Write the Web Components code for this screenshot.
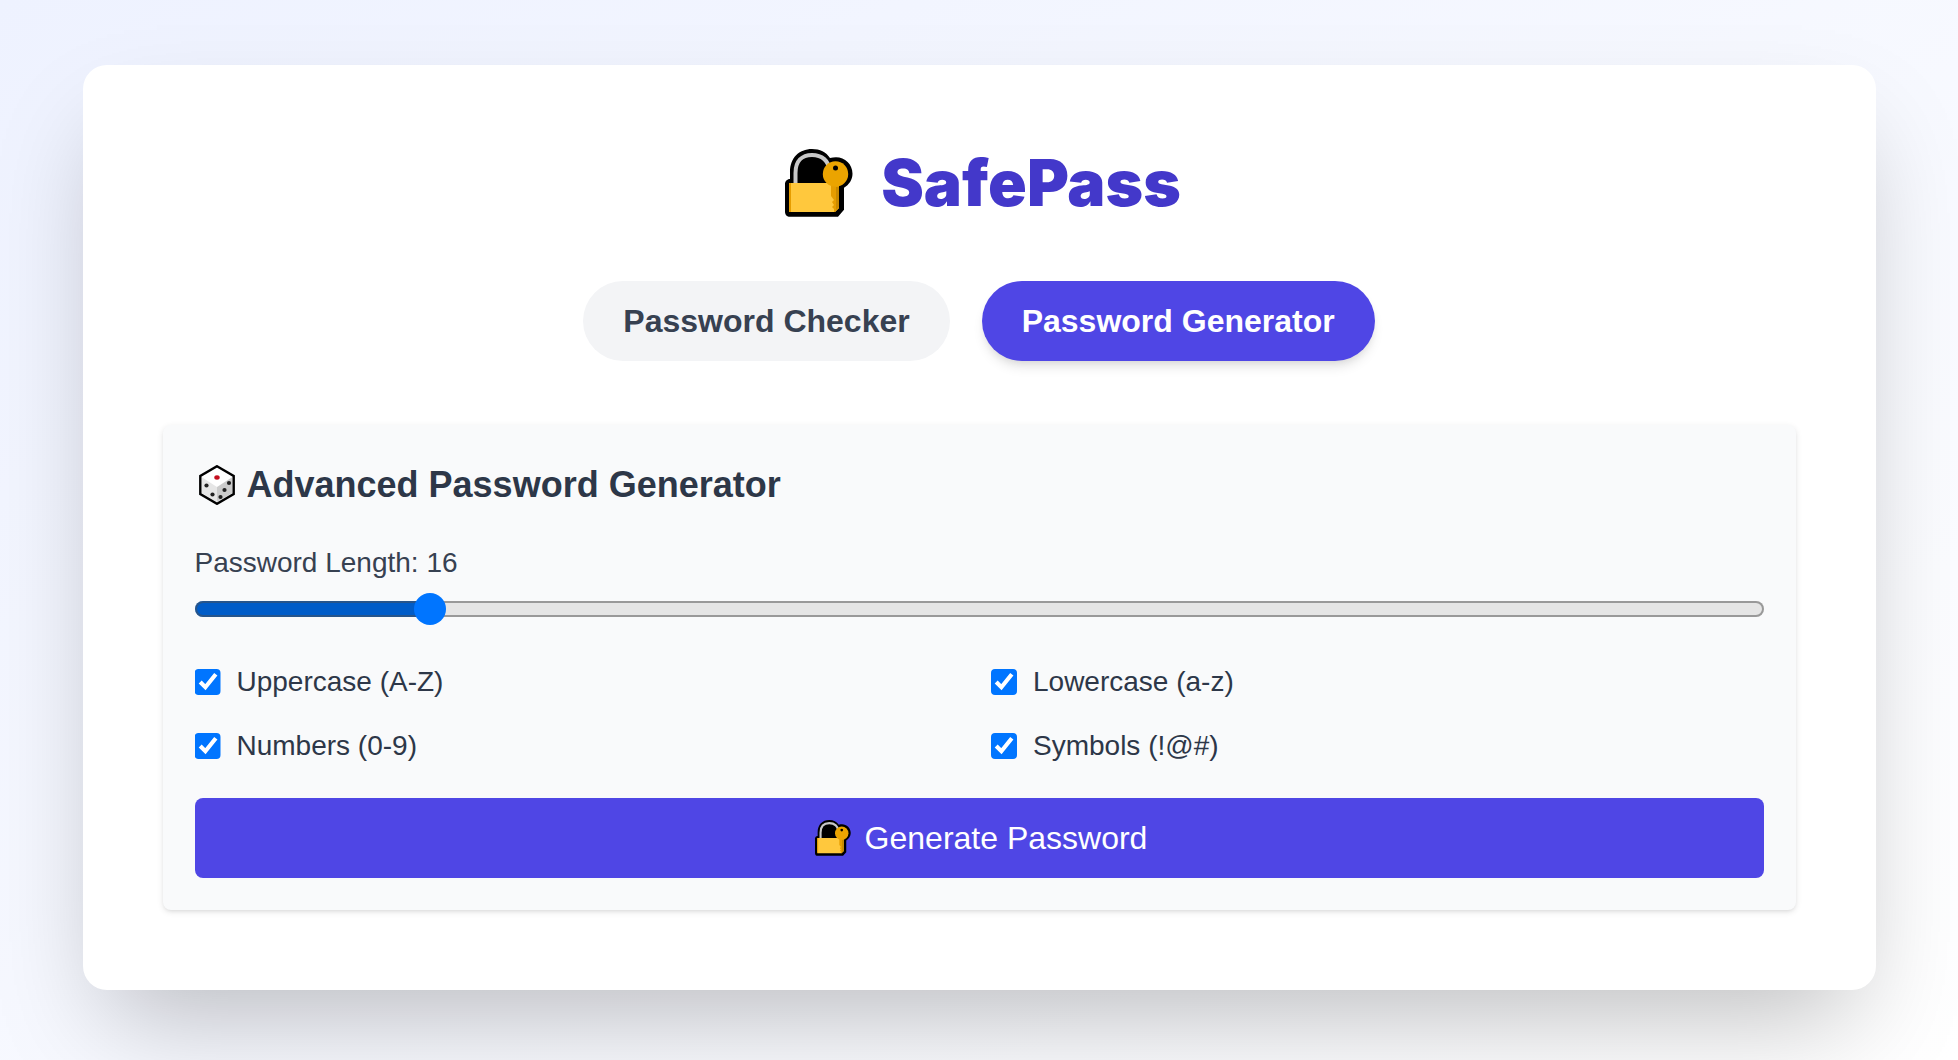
<!DOCTYPE html>
<html lang="en">
<head>
<meta charset="utf-8">
<title>SafePass</title>
<style>
  html { background: #fff; }
  body {
    margin: 0;
    min-height: 100vh;
    box-sizing: border-box;
    padding: 65px 32px 70px;
    background: linear-gradient(to bottom right, #eef2ff, #ffffff);
    font-family: "Liberation Sans", Arial, sans-serif;
    color: #2d3748;
  }
</style>
</head>
<body>
<safe-pass-app></safe-pass-app>
<script>
class BaseElement extends HTMLElement {
  render(html) {
    this.attachShadow({ mode: 'open' }).innerHTML = html;
    return this.shadowRoot;
  }
}

class LockIcon extends BaseElement {
  connectedCallback() {
    this.render(`
      <style>
        :host { display: inline-flex; flex: none; width: 68px; height: 68px; }
        svg { width: 100%; height: 100%; display: block; }
      </style>
      <svg viewBox="0 0 68 68" aria-hidden="true">
        <path d="M5 30V23C5 9 14 0 27 0c8 0 14 3 18 9 2-.6 4-.8 6-.8 9 0 16.500 7 16.500 16.500 0 6-3.500 11-8.500 14v22l-6 7H5c-3 0-5-2-5-5V35c0-2.500 2-5 5-5z" fill="#000"/>
        <path d="M10.500 34V24C10.500 12 17 6 27 6s17 6 17 15" fill="none" stroke="#c8c8c8" stroke-width="4"/>
        <path d="M4 34h50v25l-4 4H6l-2-2z" fill="#ffc83d"/>
        <path d="M4 34h2v29H4zM46 34h8v25l-4 4h-1v-3l-2-2 2-2-2-3 2-2-3-4z" fill="#e69d00"/>
        <path d="M51 38h3v20l-3 3z" fill="#c98a00"/>
        <circle cx="50.500" cy="25" r="12.700" fill="#eba400"/>
        <circle cx="50.500" cy="19" r="2.500" fill="#000"/>
      </svg>`);
  }
}
customElements.define('lock-icon', LockIcon);

class DiceIcon extends BaseElement {
  connectedCallback() {
    this.render(`
      <style>
        :host { display: inline-flex; flex: none; width: 36px; height: 40px; }
        svg { width: 100%; height: 100%; display: block; }
      </style>
      <svg viewBox="0 0 36 40" aria-hidden="true">
        <path d="M18 1.200 34.700 11v18L18 38.800 1.300 29V11z" fill="#fff"/>
        <path d="M2.500 12 18 22V37L2.500 28z" fill="#e6e6e6"/>
        <path d="M33.500 12 18 22V37l15.500-9z" fill="#cccccc"/>
        <path d="M18 1.200 34.700 11v18L18 38.800 1.300 29V11z" fill="none" stroke="#000" stroke-width="2.400"/>
        <ellipse cx="18" cy="12.500" rx="2.700" ry="2.200" fill="#c50f1f"/>
        <g fill="#222"><ellipse cx="7.500" cy="20.500" rx="2.100" ry="2.100"/><ellipse cx="13.500" cy="29.500" rx="2.100" ry="2.100"/><ellipse cx="30" cy="18" rx="2.100" ry="2.100"/><ellipse cx="25.500" cy="25" rx="2.100" ry="2.100"/><ellipse cx="21.500" cy="32" rx="2.100" ry="2.100"/></g>
      </svg>`);
  }
}
customElements.define('dice-icon', DiceIcon);

class TabButton extends BaseElement {
  connectedCallback() {
    this.render(`
      <style>
        :host { display: block; }
        button {
          display: block; border: 0; margin: 0; padding: 16px 40px; border-radius: 40px;
          font: bold 32px/48px "Liberation Sans", Arial, sans-serif;
          background: #f3f4f6; color: #374151; cursor: pointer;
        }
        :host([active]) button {
          background: #4f46e5; color: #fff;
          box-shadow: 0 8px 12px -2px rgba(0,0,0,.1), 0 4px 8px -4px rgba(0,0,0,.1);
        }
      </style>
      <button type="button"><slot></slot></button>`);
  }
}
customElements.define('tab-button', TabButton);

class LengthSlider extends BaseElement {
  connectedCallback() {
    const root = this.render(`
      <style>
        :host { display: block; }
        label { display: block; font-size: 28px; line-height: 40px; color: #374151; }
        input {
          -webkit-appearance: none; appearance: none; display: block;
          width: 100%; height: 32px; margin: 10px 0 0; background: none; cursor: pointer;
        }
        input::-webkit-slider-runnable-track {
          height: 16px; border-radius: 8px;
          background: linear-gradient(to right, #005cc8 var(--fill), #e5e5e5 var(--fill));
          box-shadow: inset 0 0 0 2px rgba(77,77,77,.5);
        }
        input::-webkit-slider-thumb {
          -webkit-appearance: none; appearance: none; width: 32px; height: 32px;
          margin-top: -8px; border-radius: 50%; background: #0075ff;
        }
      </style>
      <label for="length">Password Length: <span></span></label>
      <input id="length" type="range" min="8" max="64" value="16">`);
    const input = root.querySelector('input');
    const out = root.querySelector('span');
    const update = () => {
      out.textContent = input.value;
      input.style.setProperty('--fill', `${(input.value - 8) / 56 * 100}%`);
    };
    input.addEventListener('input', update);
    update();
  }
}
customElements.define('length-slider', LengthSlider);

class OptionCheck extends BaseElement {
  connectedCallback() {
    this.render(`
      <style>
        :host { display: block; }
        label { display: flex; align-items: center; gap: 16px; font-size: 28px; line-height: 40px; color: #2d3748; }
        input { width: 26px; height: 26px; margin: 0; accent-color: #0075ff; clip-path: inset(0 round 4px); }
      </style>
      <label><input type="checkbox" checked><span><slot></slot></span></label>`);
  }
}
customElements.define('option-check', OptionCheck);

class GeneratorPanel extends BaseElement {
  connectedCallback() {
    this.render(`
      <style>
        :host {
          display: block; padding: 32px; border-radius: 8px; background: #f9fafb;
          box-shadow: 0 2px 6px rgba(0,0,0,.1), 0 2px 4px -2px rgba(0,0,0,.1);
        }
        h2 {
          display: flex; align-items: center; gap: 12px; margin: 0 0 30px; padding-left: 4px;
          font-size: 36px; line-height: 56px; font-weight: bold; color: #2d3748;
        }
        .options { display: grid; grid-template-columns: 1fr 1fr; gap: 24px; margin: 37px 0 32px; }
        button {
          display: flex; align-items: center; justify-content: center; gap: 14px;
          width: 100%; border: 0; margin: 0; padding: 16px 32px; border-radius: 8px;
          font: 32px/48px "Liberation Sans", Arial, sans-serif;
          background: #4f46e5; color: #fff; cursor: pointer;
        }
        lock-icon { width: 36px; height: 36px; margin-left: 4px; }
      </style>
      <h2><dice-icon></dice-icon>Advanced Password Generator</h2>
      <length-slider></length-slider>
      <div class="options">
        <option-check>Uppercase (A-Z)</option-check>
        <option-check>Lowercase (a-z)</option-check>
        <option-check>Numbers (0-9)</option-check>
        <option-check>Symbols (!@#)</option-check>
      </div>
      <button type="button"><lock-icon></lock-icon>Generate Password</button>`);
  }
}
customElements.define('generator-panel', GeneratorPanel);

class SafePassApp extends BaseElement {
  connectedCallback() {
    this.render(`
      <style>
        :host {
          display: block; box-sizing: border-box; max-width: 1793px; margin: 0 auto; padding: 80px;
          border-radius: 24px; background: #fff; box-shadow: 0 50px 100px -24px rgba(0,0,0,.25);
        }
        h1 {
          display: flex; align-items: center; justify-content: center; gap: 28px; margin: 0 0 60px;
          font: 900 64px/76px Inter, sans-serif; color: #4338ca;
        }
        h1 lock-icon { margin-left: 8px; }
        nav { display: flex; justify-content: center; gap: 32px; margin-bottom: 64px; }
      </style>
      <h1><lock-icon></lock-icon>SafePass</h1>
      <nav>
        <tab-button>Password Checker</tab-button>
        <tab-button active>Password Generator</tab-button>
      </nav>
      <generator-panel></generator-panel>`);
  }
}
customElements.define('safe-pass-app', SafePassApp);
</script>
</body>
</html>
